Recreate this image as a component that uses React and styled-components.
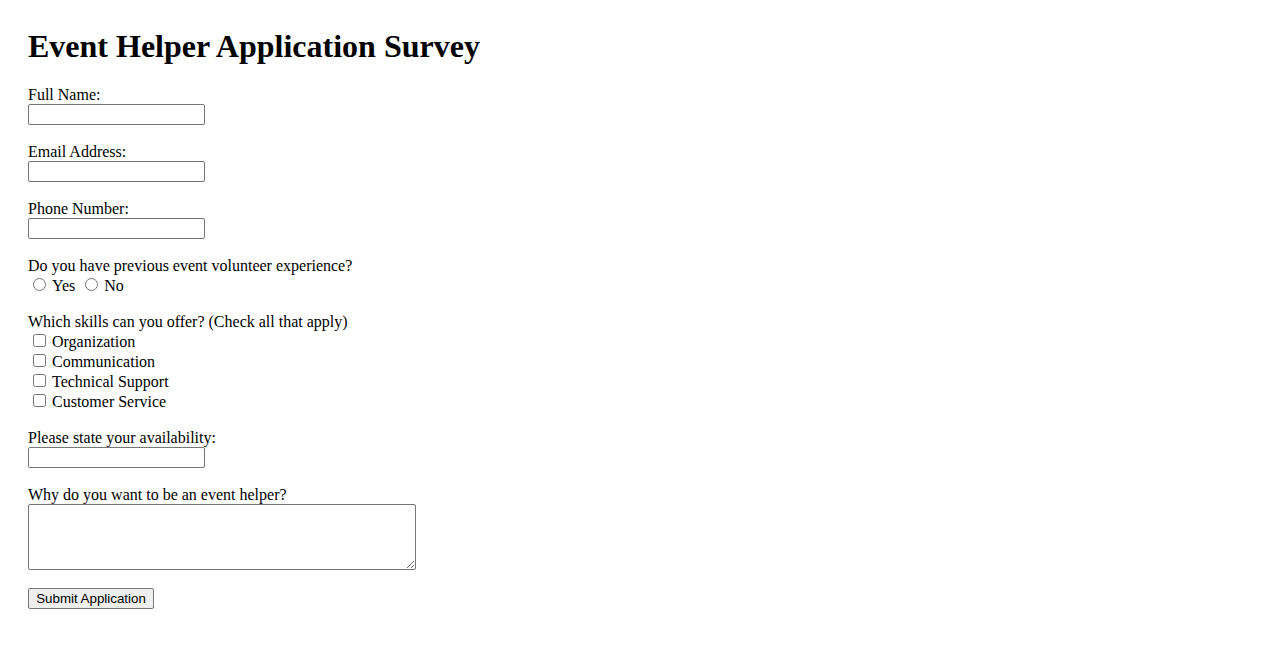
import styled, { createGlobalStyle } from 'styled-components'

const GlobalStyle = createGlobalStyle`
  body {
    margin: 0;
    padding: 28px;
    background: #fff;
    color: #000;
    font-family: 'Liberation Serif', 'Times New Roman', serif;
    font-size: 16px;
  }
`

const Title = styled.h1`
  margin: 0 0 21px;
  font-size: 32px;
  line-height: 37px;
  font-weight: bold;
`

const Field = styled.div`
  margin-bottom: 18px;
`

const Label = styled.label`
  display: block;
  line-height: 18px;
  height: 18px;
`

const TextInput = styled.input`
  display: block;
  box-sizing: border-box;
  width: 177px;
  height: 21px;
  margin: 0;
  padding: 1px 2px;
  border: 1px solid #767676;
  border-radius: 2px;
  font-family: 'Liberation Sans', Arial, sans-serif;
  font-size: 13px;
`

const TextArea = styled.textarea`
  display: block;
  box-sizing: border-box;
  width: 388px;
  height: 66px;
  margin: 0;
  padding: 2px;
  border: 1px solid #767676;
  border-radius: 2px;
  font-family: 'Liberation Mono', monospace;
  font-size: 13px;
`

const InlineOptions = styled.div`
  display: flex;
  align-items: center;
  height: 20px;
  gap: 5px;
`

const Option = styled.label`
  display: flex;
  align-items: center;
  box-sizing: border-box;
  height: 20px;
  padding-top: 2px;
  line-height: 18px;
`

const Tick = styled.input`
  width: 13px;
  height: 13px;
  margin: 0 6px 4px 5px;
`

const SubmitButton = styled.button`
  box-sizing: border-box;
  height: 21px;
  width: 126px;
  padding: 1px 6px;
  border: 1px solid #767676;
  border-radius: 2px;
  background: #efefef;
  color: #000;
  font-family: 'Liberation Sans', Arial, sans-serif;
  font-size: 13.33px;
`

const skills = ['Organization', 'Communication', 'Technical Support', 'Customer Service']

export default function App() {
  return (
    <>
      <GlobalStyle />
      <Title>Event Helper Application Survey</Title>
      <form onSubmit={e => e.preventDefault()}>
        <Field>
          <Label htmlFor="name">Full Name:</Label>
          <TextInput id="name" type="text" />
        </Field>
        <Field>
          <Label htmlFor="email">Email Address:</Label>
          <TextInput id="email" type="email" />
        </Field>
        <Field>
          <Label htmlFor="phone">Phone Number:</Label>
          <TextInput id="phone" type="tel" />
        </Field>
        <Field>
          <Label as="div">Do you have previous event volunteer experience?</Label>
          <InlineOptions>
            <Option>
              <Tick type="radio" name="experience" value="yes" />
              Yes
            </Option>
            <Option>
              <Tick type="radio" name="experience" value="no" />
              No
            </Option>
          </InlineOptions>
        </Field>
        <Field>
          <Label as="div">Which skills can you offer? (Check all that apply)</Label>
          {skills.map(skill => (
            <Option key={skill}>
              <Tick type="checkbox" name="skills" value={skill} />
              {skill}
            </Option>
          ))}
        </Field>
        <Field>
          <Label htmlFor="availability">Please state your availability:</Label>
          <TextInput id="availability" type="text" />
        </Field>
        <Field>
          <Label htmlFor="reason">Why do you want to be an event helper?</Label>
          <TextArea id="reason" />
        </Field>
        <SubmitButton type="submit">Submit Application</SubmitButton>
      </form>
    </>
  )
}
